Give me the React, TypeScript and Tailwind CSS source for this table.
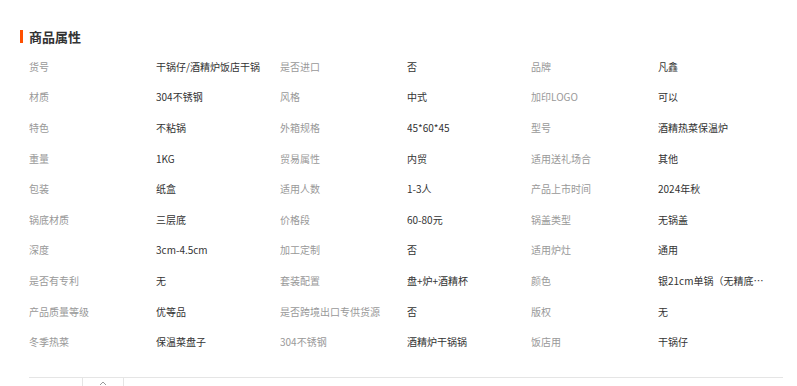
import React from 'react';

const rows: string[][] = [
  ['货号', '干锅仔/酒精炉饭店干锅', '是否进口', '否', '品牌', '凡鑫'],
  ['材质', '304不锈钢', '风格', '中式', '加印LOGO', '可以'],
  ['特色', '不粘锅', '外箱规格', '45*60*45', '型号', '酒精热菜保温炉'],
  ['重量', '1KG', '贸易属性', '内贸', '适用送礼场合', '其他'],
  ['包装', '纸盒', '适用人数', '1-3人', '产品上市时间', '2024年秋'],
  ['锅底材质', '三层底', '价格段', '60-80元', '锅盖类型', '无锅盖'],
  ['深度', '3cm-4.5cm', '加工定制', '否', '适用炉灶', '通用'],
  ['是否有专利', '无', '套装配置', '盘+炉+酒精杯', '颜色', '银21cm单锅（无精底锅盖）'],
  ['产品质量等级', '优等品', '是否跨境出口专供货源', '否', '版权', '无'],
  ['冬季热菜', '保温菜盘子', '304不锈钢', '酒精炉干锅锅', '饭店用', '干锅仔'],
];

const App: React.FC = () => {
  return (
    <div className="w-[797px] h-[386px] overflow-hidden bg-white font-['Noto_Sans_CJK_SC','Microsoft_YaHei',sans-serif]">
      {/* 标题 */}
      <div className="flex items-start gap-[6px] pl-[20px] pt-[28px] h-[51px]">
        <span className="w-[3px] h-[13px] mt-[2px] bg-[#ff5000]" />
        <h2 className="text-[13px] leading-[17px] font-bold text-[#333]">商品属性</h2>
      </div>

      <div className="mx-[29px] w-[754px]">
        {rows.map((row, i) => (
          <div
            key={i}
            className="grid grid-cols-[127px_124px_127px_124px_127px_124px] h-[30.6px] items-center text-[10px]"
          >
            {row.map((cell, j) => (
              <div
                key={j}
                className={`truncate pr-[18px] ${j % 2 === 0 ? 'text-[#999]' : 'text-[#333]'}`}
              >
                {cell}
              </div>
            ))}
          </div>
        ))}

        {/* 底部收起 */}
        <div className="mt-[20px] border-t border-[#e5e5e5] flex">
          <div className="ml-[53px] w-[42px] h-[10px] border-x border-[#e5e5e5] flex justify-center">
            <svg width="8" height="6" viewBox="0 0 8 6" className="mt-[2px]">
              <path d="M1 5 L4 2 L7 5" fill="none" stroke="#999" strokeWidth="1" />
            </svg>
          </div>
        </div>
      </div>
    </div>
  );
};

export default App;
